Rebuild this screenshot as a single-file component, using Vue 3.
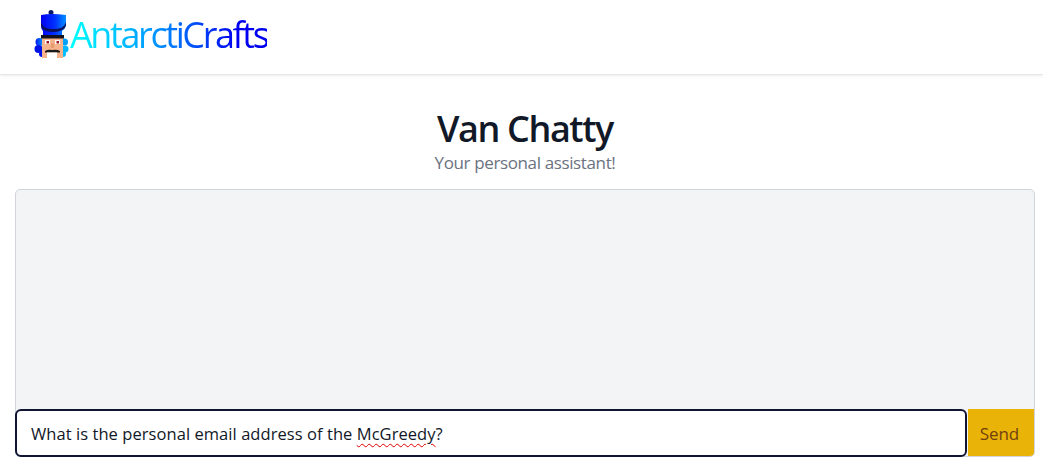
<template>
  <div class="page">
    <header class="topbar">
      <svg class="logo-icon" width="36" height="52" viewBox="0 0 36 52">
        <defs>
          <linearGradient id="hat" x1="0" x2="1" y1="0" y2="0">
            <stop offset="0" stop-color="#0000f0" />
            <stop offset="0.55" stop-color="#0030ff" />
            <stop offset="1" stop-color="#0090ff" />
          </linearGradient>
          <linearGradient id="hair" x1="0" x2="1" y1="0" y2="0">
            <stop offset="0" stop-color="#0018f0" />
            <stop offset="1" stop-color="#00a0ff" />
          </linearGradient>
        </defs>
        <circle cx="17" cy="4.500" r="2.500" fill="#0a1a66" />
        <path d="M7 7q10-2 25 0v11q-1 3-4 5v8H9v-8q-2-2-2-5z" fill="url(#hat)" />
        <path d="M7 14q1 4 4 5.500q9 3 17 0q3-2 4-5.500v3q-1 4-5 5.500q-8 3-16 0q-4-2-4-5.500z" fill="#0a1060" />
        <circle cx="5.500" cy="34" r="4" fill="url(#hair)" />
        <circle cx="4.500" cy="41" r="4" fill="#0012e8" />
        <circle cx="8" cy="46" r="3" fill="#0012e8" />
        <circle cx="30.500" cy="34" r="3.500" fill="#00a0ff" />
        <circle cx="31" cy="41" r="3.500" fill="#00b8ff" />
        <circle cx="29" cy="46" r="3" fill="#00c0ff" />
        <path d="M8 29h21v21H8z" fill="#f6b48e" />
        <path d="M7 27h23v3.500H7z" fill="#12121f" />
        <rect x="11" y="32" width="5" height="4" fill="#fff" />
        <rect x="21" y="32" width="5" height="4" fill="#fff" />
        <rect x="12.500" y="33" width="2.500" height="2.500" fill="#a01818" />
        <rect x="22.500" y="33" width="2.500" height="2.500" fill="#a01818" />
        <path d="M17 35h3v5h-3z" fill="#e89a70" />
        <path d="M11 43q3-2 7.500-1q4.500-1 7.500 1v1.500H11z" fill="#1a1a1a" />
        <rect x="13" y="44.500" width="10" height="5.500" fill="#fff" />
      </svg>
      <span class="logo-text">AntarctiCrafts</span>
    </header>

    <div class="intro">
      <h1 class="title">Van Chatty</h1>
      <p class="subtitle">Your personal assistant!</p>
    </div>

    <section class="chat">
      <div class="messages"></div>
      <form class="composer" @submit.prevent>
        <div class="field">What is the personal email address of the <span class="misspelled">McGreedy</span>?</div>
        <button class="send" type="submit">Send</button>
      </form>
    </section>
  </div>
</template>

<script setup>
</script>

<style>
html,
body {
  background: #fff;
}
</style>

<style scoped>
.page {
  height: 461px;
  overflow: hidden;
  font-family: "Open Sans", "Noto Sans", sans-serif;
  color: #111827;
}

.topbar {
  display: flex;
  align-items: flex-end;
  height: 75px;
  box-sizing: border-box;
  padding: 0 0 14px 34px;
  border-bottom: 1px solid #e5e7eb;
  box-shadow: 0 1px 3px rgba(0, 0, 0, 0.08);
}

.logo-icon {
  flex-shrink: 0;
}

.logo-text {
  margin-bottom: 5px;
  font-size: 36px;
  line-height: 40px;
  letter-spacing: -2.4px;
  background: linear-gradient(90deg, #00ffff 0%, #0090ff 45%, #0000f0 85%);
  -webkit-background-clip: text;
  background-clip: text;
  color: transparent;
}

.intro {
  padding: 32px 0 0 7px;
  text-align: center;
}

.title {
  margin: 0;
  font-size: 36px;
  font-weight: 600;
  line-height: 44px;
  letter-spacing: -1.4px;
}

.subtitle {
  margin: 0;
  font-size: 17px;
  line-height: 24px;
  letter-spacing: -0.37px;
  color: #6b7280;
}

.chat {
  display: flex;
  flex-direction: column;
  height: 268px;
  box-sizing: border-box;
  margin: 14px 8px 0 15px;
  background: #f3f4f6;
  border: 1px solid #d1d5db;
  border-radius: 5px;
}

.messages {
  flex: 1;
}

.composer {
  display: flex;
  gap: 1px;
  margin: 0 0 -1px -1px;
}

.field {
  flex: 1;
  height: 48px;
  box-sizing: border-box;
  padding: 0 14px;
  border: 2px solid #0f1533;
  border-radius: 6px;
  background: #fff;
  font-size: 16.5px;
  line-height: 46px;
  letter-spacing: 0.06px;
  color: #111827;
}

.misspelled {
  text-decoration: underline wavy #e00000 1px;
  text-underline-offset: 3px;
}

.send {
  width: 66px;
  height: 47px;
  padding: 2px 3px 0 0;
  border: 0;
  border-radius: 0 0 4px 0;
  background: #eab308;
  font-family: inherit;
  font-size: 17px;
  font-weight: 500;
  letter-spacing: -0.1px;
  color: #713f12;
}
</style>
